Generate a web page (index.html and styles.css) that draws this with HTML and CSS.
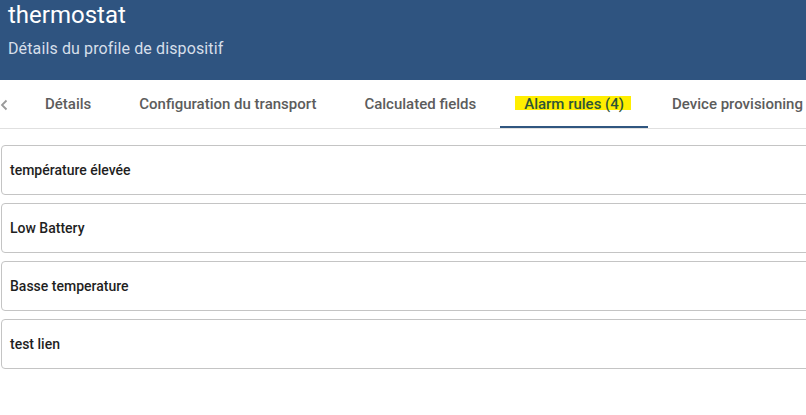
FILE: index.html
```html
<!DOCTYPE html>
<html lang="fr">
<head>
<meta charset="utf-8">
<link rel="stylesheet" href="styles.css">
</head>
<body>
<header class="header">
  <div class="title">thermostat</div>
  <div class="subtitle">Détails du profile de dispositif</div>
</header>
<nav class="tabs">
  <div class="pager">
    <svg width="8" height="12" viewBox="0 0 8 12"><path d="M6.5 1.5 L2 6 L6.5 10.5" fill="none" stroke="#9a9a9a" stroke-width="1.8"/></svg>
  </div>
  <div class="tab">Détails</div>
  <div class="tab">Configuration du transport</div>
  <div class="tab">Calculated fields</div>
  <div class="tab active"><span class="hl">Alarm rules (4)</span></div>
  <div class="tab">Device provisioning</div>
</nav>
<main class="rules">
  <div class="rule">température élevée</div>
  <div class="rule">Low Battery</div>
  <div class="rule">Basse temperature</div>
  <div class="rule">test lien</div>
</main>
</body>
</html>
```
FILE: styles.css
```css
html, body {
  margin: 0;
  padding: 0;
  overflow: hidden;
  background: #ffffff;
  font-family: Roboto, "Liberation Sans", sans-serif;
}
.header {
  height: 80px;
  box-sizing: border-box;
  background: #2f5480;
  padding: 1px 0 0 8px;
}
.title {
  color: #ffffff;
  font-size: 24px;
  line-height: 28px;
}
.subtitle {
  margin-top: 10px;
  color: #d6dfea;
  font-size: 16px;
  line-height: 20px;
  letter-spacing: 0.12px;
}
.tabs {
  display: flex;
  height: 48px;
  border-bottom: 1px solid #e0e0e0;
  white-space: nowrap;
  overflow: hidden;
}
.pager {
  width: 21px;
  flex: none;
  display: flex;
  align-items: center;
  padding-top: 1px;
}
.tab {
  flex: none;
  display: flex;
  align-items: center;
  padding: 0 24px;
  font-size: 15px;
  font-weight: 500;
  color: #5c5c5c;
  box-sizing: border-box;
  height: 48px;
}
.tab.active {
  border-bottom: 2px solid #305680;
  padding-top: 2px;
  color: #2e5537;
}
.hl {
  position: relative;
  z-index: 0;
}
.hl::before {
  content: "";
  position: absolute;
  left: -9px;
  right: -7px;
  top: 1px;
  bottom: 3px;
  background: #ffee00;
  z-index: -1;
}
.rules {
  display: flex;
  flex-direction: column;
  gap: 8px;
  padding: 16px 0 0 1px;
  width: 840px;
}
.rule {
  height: 50px;
  box-sizing: border-box;
  border: 1px solid #c4c4c4;
  border-radius: 4px;
  display: flex;
  align-items: center;
  padding-left: 8px;
  font-size: 14px;
  font-weight: 500;
  color: #1f1f1f;
}
```
